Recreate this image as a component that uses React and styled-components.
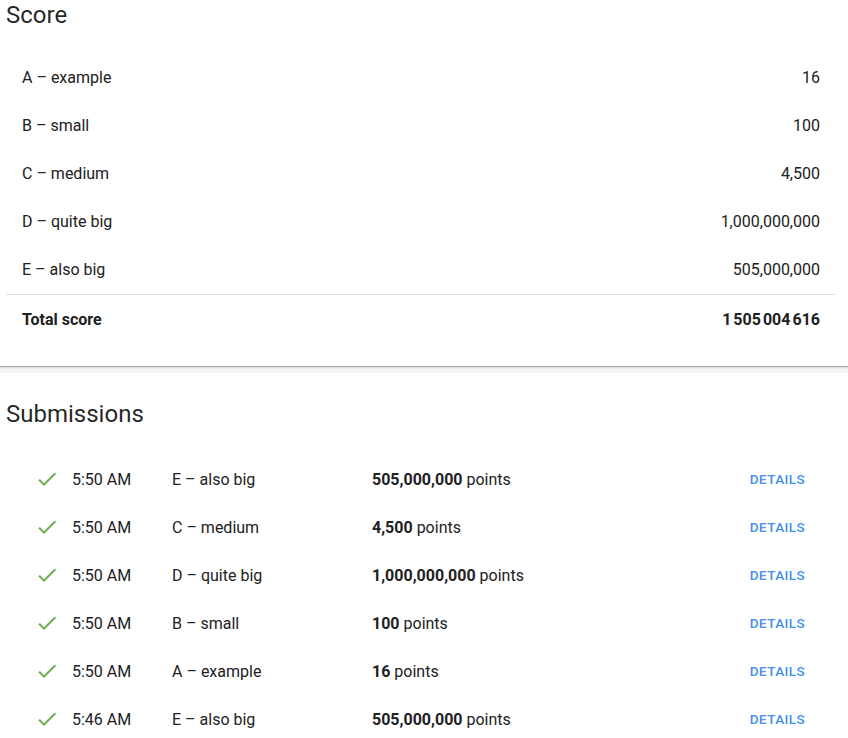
import React from "react";
import styled, { createGlobalStyle } from "styled-components";

const Global = createGlobalStyle`
  html, body { margin: 0; padding: 0; background: #f5f5f5; }
  body { font-family: Roboto, "Noto Sans", sans-serif; color: rgba(0,0,0,0.87); }
`;

const Page = styled.div`
  display: flex;
  flex-direction: column;
  gap: 7px;
`;

const Card = styled.section`
  background: #fff;
  box-shadow: 0 1px 1px rgba(0,0,0,0.25), 0 2px 2px rgba(0,0,0,0.08);
  padding: ${(p) => p.$pad || "0 12px 24px 6px"};
`;

const Title = styled.h2`
  margin: 0;
  font-size: 24px;
  font-weight: 400;
  line-height: 30px;
  color: rgba(0,0,0,0.87);
  padding-top: ${(p) => p.$top || 0}px;
`;

const ScoreTable = styled.div`
  margin-top: 24px;
  display: flex;
  flex-direction: column;
`;

const ScoreRow = styled.div`
  display: flex;
  justify-content: space-between;
  align-items: center;
  height: 48px;
  padding: ${(p) => (p.$total ? "1px 16px 0" : "0 16px 1px")};
  box-sizing: border-box;
  font-size: 16px;
  font-weight: ${(p) => (p.$total ? 700 : 400)};
  border-top: ${(p) => (p.$total ? "1px solid #e0e0e0" : "none")};
  color: #212121;
`;

const SubList = styled.div`
  margin-top: 26px;
  display: flex;
  flex-direction: column;
`;

const SubRow = styled.div`
  display: grid;
  grid-template-columns: 37px 100px 200px 1fr auto;
  align-items: center;
  height: 48px;
  padding-left: 29px;
  font-size: 16px;
  color: #212121;
`;

const Check = styled.svg`
  width: 24px;
  height: 24px;
  display: block;
`;

const Points = styled.span`
  b { font-weight: 700; }
`;

const DetailsButton = styled.button`
  border: none;
  background: none;
  font-family: inherit;
  font-size: 13.5px;
  font-weight: 500;
  letter-spacing: 0.4px;
  text-transform: uppercase;
  color: #4390ea;
  padding: 6px 8px;
  margin-right: 35px;
  cursor: pointer;
`;

const scores = [
  ["A – example", "16"],
  ["B – small", "100"],
  ["C – medium", "4,500"],
  ["D – quite big", "1,000,000,000"],
  ["E – also big", "505,000,000"],
];

const subs = [
  ["5:50 AM", "E – also big", "505,000,000"],
  ["5:50 AM", "C – medium", "4,500"],
  ["5:50 AM", "D – quite big", "1,000,000,000"],
  ["5:50 AM", "B – small", "100"],
  ["5:50 AM", "A – example", "16"],
  ["5:46 AM", "E – also big", "505,000,000"],
];

export default function App() {
  return (
    <>
      <Global />
      <Page>
        <Card>
          <Title>Score</Title>
          <ScoreTable>
            {scores.map(([n, v]) => (
              <ScoreRow key={n}>
                <span>{n}</span>
                <span>{v}</span>
              </ScoreRow>
            ))}
            <ScoreRow $total>
              <span>Total score</span>
              <span>1{"\u202F"}505{"\u202F"}004{"\u202F"}616</span>
            </ScoreRow>
          </ScoreTable>
        </Card>
        <Card $pad="0 0 0 6px">
          <Title $top={26}>Submissions</Title>
          <SubList>
            {subs.map(([t, n, p], i) => (
              <SubRow key={i}>
                <Check viewBox="0 0 24 24">
                  <path d="M9 16.17L4.83 12l-1.42 1.41L9 19 21 7l-1.41-1.41z" fill="#6ab04c" />
                </Check>
                <span>{t}</span>
                <span>{n}</span>
                <Points><b>{p}</b> points</Points>
                <DetailsButton>Details</DetailsButton>
              </SubRow>
            ))}
          </SubList>
        </Card>
      </Page>
    </>
  );
}
